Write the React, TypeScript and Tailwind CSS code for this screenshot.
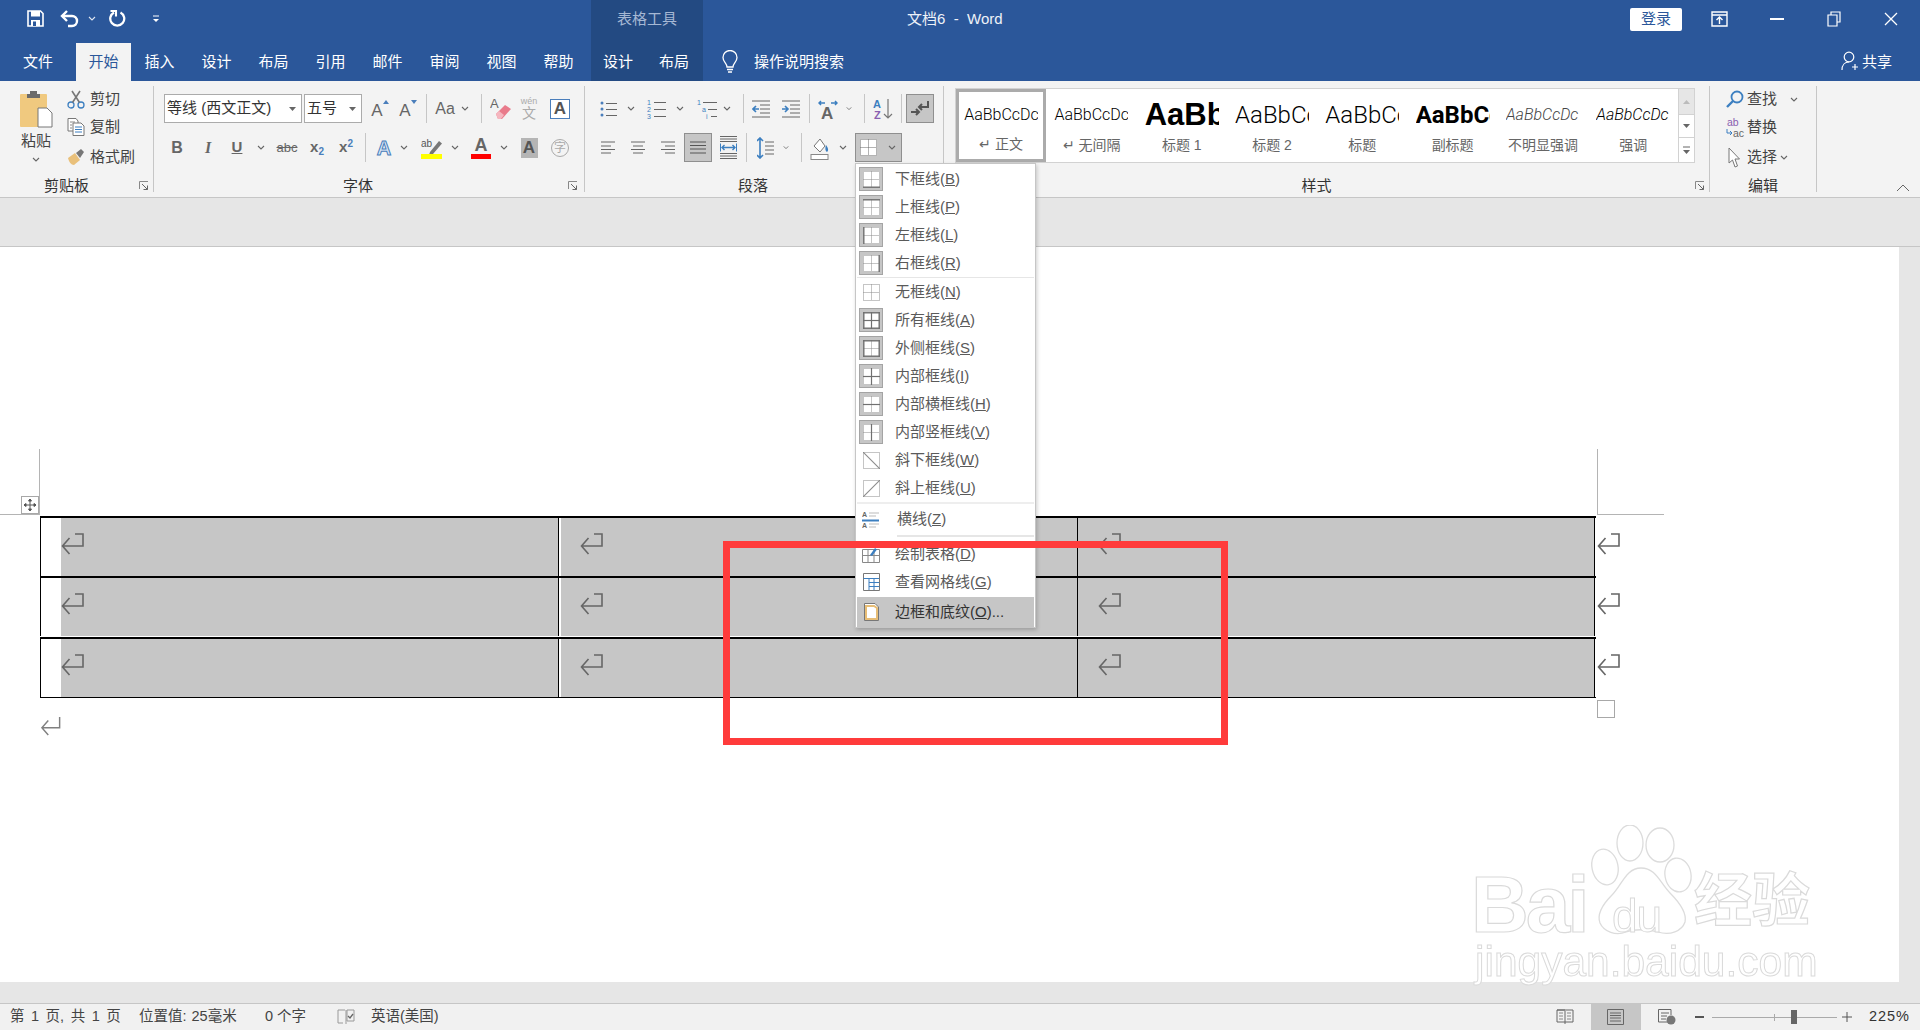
import React from "react";

const Chev = ({ c = "#666" }: { c?: string }) => (
  <svg width="8" height="5" viewBox="0 0 8 5" fill="none"><path d="M1 1L4 4L7 1" stroke={c} strokeWidth="1.1" /></svg>
);
const Launcher = () => (
  <svg width="10" height="10" viewBox="0 0 10 10" fill="none"><path d="M0.5 8V0.5H9" stroke="#888" /><path d="M3 3L8.5 8.5M8.5 4.5V8.5H4.5" stroke="#666" /></svg>
);
const Sep = () => <div className="w-px h-[29px] bg-[#c6c6c6] shrink-0" />;
const Ret = ({ c = "#666" }: { c?: string }) => (
  <svg width="23" height="22" viewBox="0 0 23 22" fill="none"><path d="M14 1H22V13H1.5M8.5 5L1.5 13L8.5 21" stroke={c} strokeWidth="1.6" /></svg>
);
const Lines = ({ w = 16, rows, x = 0 }: { w?: number; rows: number[]; x?: number }) => (
  <>{rows.map((y, i) => <path key={i} d={`M${x} ${y}H${x + w}`} stroke="#666" strokeWidth="1" />)}</>
);

const Bd = ({ s = "", boxed = true, d = "" }: { s?: string; boxed?: boolean; d?: string }) => (
  <span className={boxed ? "w-[24px] h-[24px] shrink-0 bg-[#c6c6c6] border border-[#a4a4a4] flex items-center justify-center" : "w-[24px] h-[24px] shrink-0 flex items-center justify-center"}>
    <svg width="17" height="17" viewBox="0 0 17 17" fill={boxed ? "#fff" : "none"}>
      {boxed && <rect width="17" height="17" />}
      <path d={d ? "M.5 .5H16.5V16.5H.5Z" : "M.5 .5H16.5V16.5H.5ZM8.5 .5V16.5M.5 8.5H16.5"} fill="none" stroke="#8a8a8a" strokeDasharray="1 1" />
      {s.includes("b") && <path d="M0 16.2H17" stroke="#707070" strokeWidth="1.4" />}
      {s.includes("t") && <path d="M0 .8H17" stroke="#707070" strokeWidth="1.4" />}
      {s.includes("l") && <path d="M.8 0V17" stroke="#707070" strokeWidth="1.4" />}
      {s.includes("r") && <path d="M16.2 0V17" stroke="#707070" strokeWidth="1.4" />}
      {s.includes("h") && <path d="M0 8.5H17" stroke="#707070" strokeWidth="1.2" />}
      {s.includes("v") && <path d="M8.5 0V17" stroke="#707070" strokeWidth="1.2" />}
      {d === "down" && <path d="M0 0L17 17" stroke="#8a8a8a" strokeWidth="1.1" />}
      {d === "up" && <path d="M0 17L17 0" stroke="#8a8a8a" strokeWidth="1.1" />}
    </svg>
  </span>
);

const MenuItem = ({ icon, label, k, end = "", tone = "text-[#5a5a5a]" }: { icon: React.ReactNode; label: string; k: string; end?: string; tone?: string }) => (
  <div className={`flex items-center h-[28px] pl-[3px] shrink-0 ${tone}`}>
    {icon}
    <span className="ml-[12px] text-[15px] whitespace-nowrap">{label}(<u>{k}</u>){end}</span>
  </div>
);

const Style = ({ sample, label, cls }: { sample: string; label: string; cls: string }) => (
  <div className="w-[90.3px] h-full flex flex-col items-center shrink-0">
    <div className="h-[48px] w-[74px] overflow-hidden flex items-center justify-start text-black whitespace-nowrap mt-[2px]"><span className={cls}>{sample}</span></div>
    <div className="text-[14px] text-[#666] leading-[20px] mt-[-4px] whitespace-nowrap">{label}</div>
  </div>
);

const TopTab = ({ t }: { t: string }) => <div className="w-[57px] text-center">{t}</div>;

const TableRow = () => (
  <div className="flex h-[58px] shrink-0">
    <div className="w-[1556px] flex border-x border-black">
      <div className="w-[20px] bg-white" />
      <div className="w-[497px] bg-[#c6c6c6] pt-[15px]"><Ret /></div>
      <div className="w-px bg-black" />
      <div className="w-[2px] bg-white" />
      <div className="w-[516px] bg-[#c6c6c6] pt-[15px] pl-[19px]"><Ret /></div>
      <div className="w-px bg-black" />
      <div className="flex-1 bg-[#c6c6c6] pt-[15px] pl-[20px]"><Ret /></div>
    </div>
    <div className="ml-[2px] pt-[15px]"><Ret /></div>
  </div>
);

const roboto = "font-['Roboto','Liberation_Sans',sans-serif] font-light";

export default function App() {
  return (
    <div className="relative w-[1920px] h-[1030px] overflow-hidden flex flex-col bg-white text-[#444] text-[15px] font-['Liberation_Sans','Noto_Sans_CJK_SC',sans-serif]">
      {/* Header */}
      <div className="flex h-[81px] bg-[#2b579a] text-white shrink-0">
        <div className="w-[591px] flex flex-col">
          <div className="h-[43px] flex items-center pb-[6px]">
            <div className="ml-[26px] w-[18px] flex justify-center">
              <svg width="17" height="17" viewBox="0 0 17 17" fill="none"><path d="M1 1H13.5L16 3.5V16H1Z" stroke="#fff" strokeWidth="1.6" /><rect x="4" y="1" width="9" height="5.5" fill="#fff" /><rect x="4" y="10" width="9" height="6" fill="#fff" /><rect x="6" y="11.5" width="3" height="4.5" fill="#2b579a" /></svg>
            </div>
            <div className="ml-[16px] w-[20px] flex justify-center">
              <svg width="20" height="18" viewBox="0 0 20 18" fill="none"><path d="M2 6H12A5 5 0 0 1 12 16H8" stroke="#fff" strokeWidth="2.4" /><path d="M7 1L2 6L7 11" stroke="#fff" strokeWidth="2.4" /></svg>
            </div>
            <div className="ml-[8px]"><Chev c="#dfe6f1" /></div>
            <div className="ml-[12px] w-[18px] flex justify-center">
              <svg width="18" height="19" viewBox="0 0 18 19" fill="none"><path d="M6 3.4A7 7 0 1 0 12.5 3.4" stroke="#fff" strokeWidth="2.3" /><path d="M2.5 2H8V7.5" stroke="#fff" strokeWidth="2.1" /></svg>
            </div>
            <div className="ml-[26px]">
              <svg width="8" height="8" viewBox="0 0 8 8"><path d="M1 1H7" stroke="#fff" /><path d="M1 4H7L4 7Z" fill="#fff" /></svg>
            </div>
          </div>
          <div className="h-[38px] flex items-center">
            <div className="w-[76px] text-center">文件</div>
            <div className="w-[55px] h-full bg-[#f3f3f3] text-[#2b579a] flex items-center justify-center">开始</div>
            <TopTab t="插入" /><TopTab t="设计" /><TopTab t="布局" /><TopTab t="引用" /><TopTab t="邮件" /><TopTab t="审阅" /><TopTab t="视图" /><TopTab t="帮助" />
          </div>
        </div>
        <div className="w-[112px] bg-[#234a82] flex flex-col">
          <div className="h-[43px] flex items-center justify-center pb-[5px] text-[#a6b8d4]">表格工具</div>
          <div className="h-[38px] flex items-center"><span className="w-[54px] text-center">设计</span><span className="w-[58px] text-center">布局</span></div>
        </div>
        <div className="flex-1 flex flex-col">
          <div className="h-[43px] flex items-center pb-[5px]">
            <div className="ml-[204px] text-[15px] text-[#eef2f8] whitespace-pre">文档6  -  Word</div>
            <div className="ml-auto w-[52px] h-[23px] bg-white rounded-[2px] text-[#2b579a] flex items-center justify-center">登录</div>
            <div className="ml-[28px] w-[18px] flex justify-center">
              <svg width="17" height="16" viewBox="0 0 17 16" fill="none"><path d="M1 1H16V15H1ZM1 4H16" stroke="#fff" strokeWidth="1.4" /><path d="M8.5 13V6.5M5.5 9L8.5 6L11.5 9" stroke="#fff" strokeWidth="1.4" /></svg>
            </div>
            <div className="ml-[42px] w-[14px] h-[2px] bg-white" />
            <div className="ml-[43px]">
              <svg width="14" height="16" viewBox="0 0 14 16" fill="none"><path d="M1 4H10V15H1ZM4 4V1H13V11H10" stroke="#fff" strokeWidth="1.2" /></svg>
            </div>
            <div className="ml-[43px] mr-[22px]">
              <svg width="14" height="14" viewBox="0 0 14 14" fill="none"><path d="M1 1L13 13M13 1L1 13" stroke="#fff" strokeWidth="1.3" /></svg>
            </div>
          </div>
          <div className="h-[38px] flex items-center">
            <div className="ml-[19px]">
              <svg width="16" height="24" viewBox="0 0 16 24" fill="none"><path d="M5 17C5 13 1 12 1 7.5A7 7 0 0 1 15 7.5C15 12 11 13 11 17Z" stroke="#fff" strokeWidth="1.3" /><path d="M5 19.5H11M6 22H10" stroke="#fff" strokeWidth="1.5" /></svg>
            </div>
            <div className="ml-[16px]">操作说明搜索</div>
            <div className="ml-auto">
              <svg width="17" height="22" viewBox="0 0 17 22" fill="none"><circle cx="8" cy="6" r="4.8" stroke="#fff" strokeWidth="1.2" /><path d="M1 19C1 14 4 11 8 11M11 16H17M14 13V19" stroke="#fff" strokeWidth="1.2" /></svg>
            </div>
            <div className="ml-[4px] mr-[28px]">共享</div>
          </div>
        </div>
      </div>

      {/* Ribbon */}
      <div className="h-[117px] shrink-0 bg-[#f3f3f3] border-b border-[#c6c6c6] flex items-start">
        {/* clipboard */}
        <div className="w-[154px] h-[106px] mt-[5px] border-r border-[#c6c6c6] flex flex-col shrink-0 *:shrink-0">
          <div className="flex h-[89px]">
            <div className="ml-[3px] w-[64px] flex flex-col items-center pl-[2px]">
              <svg className="mt-[4px] shrink-0" width="34" height="38" viewBox="0 0 34 38"><rect x="1" y="4" width="27" height="33" rx="1" fill="#f0c97f" /><path d="M8 4H11V1H18V4H21V8H8Z" fill="#6b6b6b" /><path d="M19 18H28L33 23V37H19Z" fill="#fff" stroke="#777" /></svg>
              <div className="mt-[2px] leading-[22px]">粘贴</div>
              <div className="mt-[5px]"><Chev /></div>
            </div>
            <div className="flex flex-col *:shrink-0">
              <div className="h-[26px] flex items-center">
                <div className="w-[18px]"><svg width="18" height="19" viewBox="0 0 18 19" fill="none"><circle cx="4" cy="15" r="3" stroke="#3c7fc0" strokeWidth="1.3" /><circle cx="14" cy="15" r="3" stroke="#3c7fc0" strokeWidth="1.3" /><path d="M5.5 12.5L13 1M12.5 12.5L5 1" stroke="#777" strokeWidth="1.6" /></svg></div>
                <div className="ml-[5px]">剪切</div>
              </div>
              <div className="h-[30px] flex items-center">
                <div className="w-[18px]"><svg width="18" height="18" viewBox="0 0 18 18" fill="none"><path d="M1 .5H9L11 3V13H1Z" fill="#fff" stroke="#777" /><path d="M6 5H14L17 8V17.5H6Z" fill="#fff" stroke="#777" /><path d="M8 9H15M8 11.5H15M8 14H15" stroke="#3c7fc0" /><path d="M3 4H8M3 7H5M3 10H5" stroke="#888" /></svg></div>
                <div className="ml-[5px]">复制</div>
              </div>
              <div className="h-[30px] flex items-center">
                <div className="w-[18px]"><svg width="18" height="18" viewBox="0 0 18 18"><path d="M1 10L8 5L13 12L7 17C4 17 2 14 1 10Z" fill="#e9c07a" /><path d="M9 5L14 1L17 4L13 10Z" fill="#777" /></svg></div>
                <div className="ml-[5px] whitespace-nowrap">格式刷</div>
              </div>
            </div>
          </div>
          <div className="h-[20px] flex items-center translate-y-px">
            <div className="flex-1 text-center text-[#333]">剪贴板</div>
            <div className="w-[20px] pl-[6px]"><Launcher /></div>
          </div>
        </div>

        {/* font */}
        <div className="w-[431px] h-[106px] mt-[5px] border-r border-[#c6c6c6] flex flex-col shrink-0 *:shrink-0">
          <div className="h-[29px] mt-[8px] flex items-center">
            <div className="ml-[10px] w-[138px] h-[29px] bg-white border border-[#ababab] flex items-center justify-between pl-[2px] pr-[5px] text-[#333] whitespace-nowrap">
              <span>等线 (西文正文)</span><svg width="7" height="4" viewBox="0 0 7 4"><path d="M0 0H7L3.5 4Z" fill="#666" /></svg>
            </div>
            <div className="ml-[2px] w-[58px] h-[29px] bg-white border border-[#ababab] flex items-center justify-between pl-[2px] pr-[5px] text-[#333]">
              <span>五号</span><svg width="7" height="4" viewBox="0 0 7 4"><path d="M0 0H7L3.5 4Z" fill="#666" /></svg>
            </div>
            <div className="ml-[4px] w-[28px] flex justify-center text-[17px] text-[#666] leading-none"><span className="pt-[3px]">A</span><svg className="mt-[1px]" width="6" height="4" viewBox="0 0 6 4"><path d="M0 4L3 0L6 4Z" fill="#4a7ebb" /></svg></div>
            <div className="w-[28px] flex justify-center text-[17px] text-[#666] leading-none"><span className="pt-[3px]">A</span><svg className="mt-[1px]" width="6" height="4" viewBox="0 0 6 4"><path d="M0 0L3 4L6 0Z" fill="#4a7ebb" /></svg></div>
            <div className="ml-[4px]"><Sep /></div>
            <div className="ml-[2px] w-[32px] text-center text-[16px] text-[#666]">Aa</div>
            <div className="w-[8px] flex justify-center"><Chev /></div>
            <div className="ml-[12px]"><Sep /></div>
            <div className="w-[38px] flex justify-center">
              <svg width="22" height="24" viewBox="0 0 22 24"><text x="0" y="11" fontSize="13" fill="#666" fontFamily="Liberation Sans">A</text><path d="M6 17L15 8L21 12L12 22H8Z" fill="#e97b8b" /><path d="M6 17L9 14L14 18L11 22H8Z" fill="#f5b6bf" /></svg>
            </div>
            <div className="w-[18px] flex flex-col items-center text-[#aaa] leading-none">
              <span className="text-[9px]">wén</span><span className="text-[14px]">文</span>
            </div>
            <div className="ml-[12px] w-[20px] h-[20px] border border-[#4a7ebb] bg-white text-[17px] text-[#555] flex items-center justify-center leading-none font-semibold">A</div>
          </div>
          <div className="h-[29px] mt-[10px] flex items-center text-[#666]">
            <div className="ml-[9px] w-[28px] text-center font-bold text-[16px]">B</div>
            <div className="ml-[3px] w-[28px] text-center italic font-bold text-[16px] font-['Liberation_Serif',serif]">I</div>
            <div className="w-[30px] text-center font-bold text-[15px] underline">U</div>
            <div className="w-[18px] flex justify-center"><Chev /></div>
            <div className="w-[34px] text-center text-[13px] line-through">abc</div>
            <div className="w-[26px] text-center font-bold text-[15px]">x<sub className="text-[10px] text-[#4a7ebb]">2</sub></div>
            <div className="w-[32px] text-center font-bold text-[15px]">x<sup className="text-[10px] text-[#4a7ebb]">2</sup></div>
            <div className="ml-[3px]"><Sep /></div>
            <div className="ml-[3px] w-[30px] text-center text-[20px] font-bold text-[#dbe8f6] [-webkit-text-stroke:1px_#4a7ebb]">A</div>
            <div className="w-[10px] flex justify-center"><Chev /></div>
            <div className="ml-[5px] w-[36px] flex justify-center">
              <svg width="22" height="22" viewBox="0 0 22 22"><text x="0" y="10" fontSize="10" fill="#555" fontFamily="Liberation Sans">ab</text><path d="M9 15L18 4L21 6.5L12 17L8 18Z" fill="#777" /><rect x="0" y="17" width="21" height="5" fill="#ffff00" /></svg>
            </div>
            <div className="w-[10px] flex justify-center"><Chev /></div>
            <div className="ml-[3px] w-[36px] flex flex-col items-center leading-none">
              <span className="text-[18px] font-semibold">A</span><span className="w-[20px] h-[5px] bg-[#ff0000]" />
            </div>
            <div className="w-[10px] flex justify-center"><Chev /></div>
            <div className="w-[40px] flex justify-center"><span className="w-[17px] h-[20px] bg-[#b5b5b5] text-[17px] leading-[20px] text-center font-semibold text-[#555]">A</span></div>
            <div className="w-[22px] flex justify-center"><span className="w-[18px] h-[18px] rounded-full border border-[#aaa] text-[12px] leading-[16px] text-center text-[#aaa]">字</span></div>
          </div>
          <div className="mt-[14px] h-[20px] flex items-center">
            <div className="flex-1 text-center text-[#333]">字体</div>
            <div className="w-[22px] pl-[6px]"><Launcher /></div>
          </div>
        </div>

        {/* paragraph */}
        <div className="w-[359px] h-[106px] mt-[5px] border-r border-[#c6c6c6] flex flex-col shrink-0 *:shrink-0">
          <div className="h-[29px] mt-[8px] flex items-center">
            <div className="ml-[10px] w-[26px] flex justify-center"><svg width="17" height="18" viewBox="0 0 17 18" fill="none"><circle cx="2" cy="3" r="1.5" fill="#4a7ebb" /><circle cx="2" cy="9" r="1.5" fill="#4a7ebb" /><circle cx="2" cy="15" r="1.5" fill="#4a7ebb" /><Lines x={6} w={11} rows={[3.5, 9.5, 15.5]} /></svg></div>
            <div className="w-[20px] flex justify-center"><Chev /></div>
            <div className="w-[30px] flex justify-center"><svg width="19" height="20" viewBox="0 0 19 20" fill="none"><g fontSize="7" fill="#3c7fc0" fontFamily="Liberation Sans"><text x="0" y="6">1</text><text x="0" y="13">2</text><text x="0" y="20">3</text></g><Lines x={7} w={12} rows={[3.5, 10.5, 17.5]} /></svg></div>
            <div className="w-[18px] flex justify-center"><Chev /></div>
            <div className="ml-[2px] w-[32px] flex justify-center"><svg width="20" height="20" viewBox="0 0 20 20" fill="none"><g fontSize="7" fill="#3c7fc0" fontFamily="Liberation Sans"><text x="0" y="6">1</text><text x="5" y="13">a</text><text x="9" y="20">i</text></g><Lines x={6} w={14} rows={[3.5]} /><Lines x={11} w={9} rows={[10.5]} /><Lines x={14} w={6} rows={[17.5]} /></svg></div>
            <div className="w-[8px] flex justify-center"><Chev /></div>
            <div className="ml-[12px]"><Sep /></div>
            <div className="w-[34px] flex justify-center"><svg width="18" height="18" viewBox="0 0 18 18" fill="none"><Lines w={18} rows={[1, 17]} /><Lines x={8} w={10} rows={[5, 9, 13]} /><path d="M7 9H1M4 6L1 9L4 12" stroke="#3c7fc0" strokeWidth="1.6" /></svg></div>
            <div className="w-[26px] flex justify-center"><svg width="18" height="18" viewBox="0 0 18 18" fill="none"><Lines w={18} rows={[1, 17]} /><Lines x={8} w={10} rows={[5, 9, 13]} /><path d="M0 9H6M3 6L6 9L3 12" stroke="#3c7fc0" strokeWidth="1.6" /></svg></div>
            <div className="ml-[5px]"><Sep /></div>
            <div className="w-[36px] flex justify-center"><svg width="20" height="20" viewBox="0 0 20 20" fill="none"><text x="3" y="20" fontSize="17" fontWeight="bold" fill="#666" fontFamily="Liberation Sans">A</text><path d="M1 4H7M3 2L1 4L3 6M13 4H19M17 2L19 4L17 6" stroke="#3c7fc0" strokeWidth="1.5" /></svg></div>
            <div className="w-[6px] flex justify-center"><Chev /></div>
            <div className="ml-[12px]"><Sep /></div>
            <div className="w-[36px] flex justify-center"><svg width="20" height="22" viewBox="0 0 20 22" fill="none"><text x="0" y="10" fontSize="11" fontWeight="bold" fill="#3c7fc0" fontFamily="Liberation Sans">A</text><text x="1" y="21" fontSize="11" fontWeight="bold" fill="#8a5fb0" fontFamily="Liberation Sans">Z</text><path d="M15 1V20M11 16L15 20L19 16" stroke="#777" strokeWidth="1.2" /></svg></div>
            <Sep />
            <div className="ml-[4px] w-[28px] h-[29px] bg-[#c6c6c6] border border-[#8f8f8f] flex items-center justify-center"><svg width="18" height="16" viewBox="0 0 18 16" fill="none"><path d="M17 0V6H8M11 3L8 6L11 9" stroke="#555" strokeWidth="2" /><path d="M0 11H8M5 8L8 11L5 14" stroke="#555" strokeWidth="2" /></svg></div>
          </div>
          <div className="h-[29px] mt-[10px] flex items-center">
            <div className="ml-[8px] w-[30px] flex justify-center"><svg width="14" height="13" viewBox="0 0 14 13" fill="none"><path d="M0 1H14M0 5H10M0 8.5H14M0 12H10" stroke="#666" /></svg></div>
            <div className="w-[30px] flex justify-center"><svg width="14" height="13" viewBox="0 0 14 13" fill="none"><path d="M0 1H14M2 5H12M0 8.5H14M2 12H12" stroke="#666" /></svg></div>
            <div className="w-[30px] flex justify-center"><svg width="14" height="13" viewBox="0 0 14 13" fill="none"><path d="M0 1H14M4 5H14M0 8.5H14M4 12H14" stroke="#666" /></svg></div>
            <div className="ml-px w-[28px] h-[29px] bg-[#c6c6c6] border border-[#8f8f8f] flex items-center justify-center"><svg width="16" height="13" viewBox="0 0 16 13" fill="none"><path d="M0 1H16M0 4.5H16M0 8H16M0 12H16" stroke="#555" /></svg></div>
            <div className="w-[32px] flex justify-center"><svg width="17" height="23" viewBox="0 0 17 23" fill="none"><path d="M0 .5H17M0 3H17M0 5.5H17M0 17.5H17M0 20H17M0 22.5H17" stroke="#666" /><path d="M.5 7.5V15.5M16.5 7.5V15.5" stroke="#3c7fc0" /><path d="M2 11.5H15M4.5 9L2 11.5L4.5 14M12.5 9L15 11.5L12.5 14" stroke="#3c7fc0" strokeWidth="1.4" /></svg></div>
            <div className="ml-[2px]"><Sep /></div>
            <div className="w-[36px] flex justify-center"><svg width="17" height="22" viewBox="0 0 17 22" fill="none"><path d="M3 1V21M0 4L3 1L6 4M0 18L3 21L6 18" stroke="#3c7fc0" strokeWidth="1.6" /><Lines x={8} w={9} rows={[5, 9, 13, 17]} /></svg></div>
            <div className="w-[6px] flex justify-center"><Chev /></div>
            <div className="ml-[12px]"><Sep /></div>
            <div className="w-[36px] flex justify-center"><svg width="20" height="24" viewBox="0 0 20 24" fill="none"><path d="M4 10L10 3L15 10L10 16Z" fill="#fff" stroke="#777" /><path d="M16 9C18 12 19 14 17 16C15 15 15 12 16 9Z" fill="#3c7fc0" /><rect x="1" y="18.5" width="17" height="5" fill="#fff" stroke="#888" /></svg></div>
            <div className="w-[10px] flex justify-center"><Chev /></div>
            <div className="ml-[7px] w-[47px] h-[29px] bg-[#c6c6c6] border border-[#8f8f8f] flex items-center pl-[4px] shrink-0">
              <svg width="17" height="17" viewBox="0 0 17 17" fill="#fff"><rect width="17" height="17" /><path d="M.5 .5H16.5V16.5H.5ZM8.5 .5V16.5M.5 8.5H16.5" fill="none" stroke="#666" strokeDasharray="1 1" /></svg>
              <div className="ml-[11px]"><Chev /></div>
            </div>
          </div>
          <div className="mt-[14px] h-[20px] flex items-center">
            <div className="flex-1 text-center text-[#333]">段落</div>
            <div className="w-[22px] pl-[6px]"><Launcher /></div>
          </div>
        </div>

        {/* styles */}
        <div className="w-[766px] h-[106px] mt-[5px] border-r border-[#c6c6c6] flex flex-col shrink-0 *:shrink-0">
          <div className="ml-[11px] mt-[2px] w-[740px] h-[75px] bg-white border border-[#d2d2d2] flex">
            <div className="w-[90.3px] h-full border-[3px] border-[#ababab] shrink-0 flex flex-col items-center">
              <div className="h-[45px] w-[74px] overflow-hidden flex items-center text-black whitespace-nowrap"><span className={`text-[16px] ${roboto}`}>AaBbCcDc</span></div>
              <div className="text-[14px] text-[#666] leading-[20px] mt-[-3px] whitespace-nowrap">↵ 正文</div>
            </div>
            <Style sample="AaBbCcDc" label="↵ 无间隔" cls={`text-[16px] ${roboto}`} />
            <Style sample="AaBbC" label="标题 1" cls="text-[31px] font-bold" />
            <Style sample="AaBbCc" label="标题 2" cls={`text-[24px] ${roboto}`} />
            <Style sample="AaBbCc" label="标题" cls={`text-[24px] ${roboto}`} />
            <Style sample="AaBbCc" label="副标题" cls="text-[24px] font-bold font-['Roboto',sans-serif]" />
            <Style sample="AaBbCcDc" label="不明显强调" cls={`text-[16px] italic text-[#444] ${roboto}`} />
            <Style sample="AaBbCcDc" label="强调" cls={`text-[16px] italic ${roboto}`} />
            <div className="w-[16px] ml-auto flex flex-col border-l border-[#d2d2d2] shrink-0">
              <div className="h-[25px] bg-[#e6e6e6] flex items-center justify-center"><svg width="7" height="4" viewBox="0 0 7 4"><path d="M0 4H7L3.5 0Z" fill="#bbb" /></svg></div>
              <div className="h-[24px] border-y border-[#d2d2d2] flex items-center justify-center"><svg width="7" height="4" viewBox="0 0 7 4"><path d="M0 0H7L3.5 4Z" fill="#666" /></svg></div>
              <div className="flex-1 flex items-center justify-center"><svg width="7" height="9" viewBox="0 0 7 9"><path d="M0 1H7" stroke="#666" /><path d="M0 4H7L3.5 8Z" fill="#666" /></svg></div>
            </div>
          </div>
          <div className="mt-[13px] h-[20px] flex items-center">
            <div className="flex-1 text-center text-[#333]">样式</div>
            <div className="w-[20px] pl-[6px]"><Launcher /></div>
          </div>
        </div>

        {/* editing */}
        <div className="w-[107px] h-[106px] mt-[5px] border-r border-[#c6c6c6] flex flex-col shrink-0 *:shrink-0">
          <div className="h-[26px] flex items-center">
            <div className="ml-[16px] w-[18px]"><svg width="18" height="18" viewBox="0 0 18 18" fill="none"><circle cx="11" cy="7" r="5.5" stroke="#3c7fc0" strokeWidth="1.8" /><path d="M7 11L1 17" stroke="#3c7fc0" strokeWidth="2.4" /></svg></div>
            <div className="ml-[3px]">查找</div>
            <div className="ml-[13px]"><Chev /></div>
          </div>
          <div className="h-[30px] flex items-center">
            <div className="ml-[16px] w-[19px] h-[21px]"><svg width="20" height="22" viewBox="0 0 20 22"><text x="1" y="9" fontSize="10.5" fill="#8a5fb0" fontFamily="Liberation Sans">ab</text><text x="7" y="20" fontSize="10.5" fill="#666" fontFamily="Liberation Sans">ac</text><path d="M1 12V16H6M4 14L6 16L4 18" stroke="#3c7fc0" fill="none" /></svg></div>
            <div className="ml-[2px]">替换</div>
          </div>
          <div className="h-[30px] flex items-center">
            <div className="ml-[18px] w-[16px]"><svg width="12" height="21" viewBox="0 0 12 21" fill="none"><path d="M1 1V16L4.5 13L7 20L9.5 19L7 12H11.5Z" fill="#fff" stroke="#777" /></svg></div>
            <div className="ml-[3px]">选择</div>
            <div className="ml-[3px]"><Chev /></div>
          </div>
          <div className="mt-[4px] h-[20px] flex items-center justify-center text-[#333]">编辑</div>
        </div>
        <div className="flex-1 h-[106px] mt-[5px] flex items-end justify-end pr-[10px]">
          <svg width="14" height="8" viewBox="0 0 14 8" fill="none"><path d="M1 7L7 1L13 7" stroke="#666" /></svg>
        </div>
      </div>

      {/* Document area */}
      <div className="h-[49px] shrink-0 bg-[#e6e6e6] border-b border-[#c6c6c6]" />
      <div className="h-[735px] shrink-0 flex">
        <div className="flex-1 bg-white flex flex-col">
          <div className="h-[202px] shrink-0" />
          <div className="h-[66px] flex shrink-0">
            <div className="w-[40px] h-full border-r border-b border-[#b4b4b4] relative">
              <div className="absolute right-0 bottom-0 w-[18px] h-[18px] border border-[#a8a8a8] bg-white flex items-center justify-center">
                <svg width="14" height="14" viewBox="0 0 14 14" fill="none"><path d="M7 1V13M1 7H13" stroke="#555" /><path d="M5.5 3L7 1L8.5 3ZM5.5 11L7 13L8.5 11ZM3 5.5L1 7L3 8.5ZM11 5.5L13 7L11 8.5Z" fill="#555" stroke="#555" /></svg>
              </div>
            </div>
            <div className="ml-[1557px] w-[67px] h-full border-l border-b border-[#b4b4b4]" />
          </div>
          <div className="h-px shrink-0" />
          <div className="relative ml-[40px] w-[1580px] flex flex-col shrink-0">
            <div className="w-[1556px] h-[2px] bg-black" />
            <TableRow />
            <div className="w-[1556px] h-[2px] bg-black" />
            <TableRow />
            <div className="w-[1556px] h-px bg-white" />
            <div className="w-[1556px] h-[2px] bg-black" />
            <TableRow />
            <div className="w-[1556px] h-px bg-black" />
            <div className="absolute left-[1557px] top-[184px] w-[18px] h-[18px] border border-[#a8a8a8] bg-white" />
          </div>
          <div className="ml-[40px] mt-[18px]"><svg width="22" height="20" viewBox="0 0 23 22" fill="none"><path d="M21 1V13H1.5M8.5 5L1.5 13L8.5 21" stroke="#808080" strokeWidth="1.6" /></svg></div>
        </div>
        <div className="w-[21px] bg-[#e6e6e6] shrink-0" />
      </div>
      <div className="h-[21px] shrink-0 bg-[#e6e6e6]" />

      {/* Status bar */}
      <div className="h-[27px] shrink-0 bg-[#f1f1f1] border-t border-[#c6c6c6] flex items-center text-[#444] text-[14.5px] whitespace-nowrap">
        <div className="ml-[10px] w-[129px] [word-spacing:2.5px]">第 1 页,  共 1 页</div>
        <div className="w-[126px] [word-spacing:1px]">位置值: 25毫米</div>
        <div className="w-[72px]">0 个字</div>
        <div className="w-[34px]"><svg width="18" height="16" viewBox="0 0 18 16" fill="none"><path d="M8 1H1V14H6M10 1H17V12H10Z" stroke="#999" /><path d="M9 1V15" stroke="#999" /><path d="M11 7L13 9L16 5" stroke="#666" strokeWidth="1.3" /></svg></div>
        <div>英语(美国)</div>
        <div className="ml-auto flex items-center h-full">
          <svg width="18" height="16" viewBox="0 0 18 16" fill="none"><path d="M9 2V15M1 1H9M9 1H17V13H1V1Z" stroke="#666" /><path d="M3 4H7M3 7H7M3 10H7M11 4H15M11 7H15M11 10H15" stroke="#888" /></svg>
          <div className="ml-[17px] w-[50px] h-full bg-[#c6c6c6] flex items-center justify-center"><svg width="17" height="16" viewBox="0 0 17 16" fill="none"><path d="M.5 .5H16.5V15.5H.5Z" stroke="#666" /><path d="M3 4H14M3 6.5H14M3 9H14M3 12H14" stroke="#666" /></svg></div>
          <div className="ml-[17px] w-[18px]"><svg width="18" height="16" viewBox="0 0 18 16" fill="none"><path d="M11 13H.5V.5H13V6" stroke="#666" /><path d="M3 4H11M3 7H9M3 10H8" stroke="#666" /><circle cx="13" cy="11" r="4.5" fill="#777" /></svg></div>
          <div className="ml-[19px] w-[9px] h-[1.5px] bg-[#555]" />
          <div className="ml-[8px] w-[125px] h-[14px] flex items-center">
            <div className="w-[62px] h-px bg-[#aaa]" />
            <div className="w-px h-[7px] bg-[#aaa]" />
            <div className="w-[16px] h-px bg-[#aaa]" />
            <div className="w-[6px] h-[14px] bg-[#666] shrink-0" />
            <div className="flex-1 h-px bg-[#aaa]" />
          </div>
          <div className="ml-[5px]"><svg width="10" height="10" viewBox="0 0 10 10" fill="none"><path d="M0 5H10M5 0V10" stroke="#555" /></svg></div>
          <div className="ml-[17px] mr-[10px] tracking-[1px] text-[#333]">225%</div>
        </div>
      </div>

      {/* Baidu watermark (over the page) */}
      <div className="absolute left-[1475px] top-[825px] w-[345px] h-[165px] blur-[0.4px] text-white pointer-events-none">
        <svg className="absolute left-[81px] top-0" width="150" height="112" viewBox="0 0 150 112" fill="none" stroke="#dcdcdc" strokeWidth="1.3">
          <ellipse cx="74" cy="18" rx="13" ry="18" />
          <ellipse cx="104" cy="20" rx="14" ry="17" />
          <ellipse cx="49" cy="42" rx="13" ry="18" transform="rotate(-12 49 42)" />
          <ellipse cx="122" cy="50" rx="13" ry="17" transform="rotate(-10 122 50)" />
          <path d="M85 43C70 43 66 60 56 70C46 80 41 90 44 98C48 107 60 111 70 107C78 104 92 104 102 107C114 111 126 106 129 97C131 88 124 78 114 68C104 58 100 43 85 43Z" fill="#fff" />
        </svg>
        <div className="absolute left-[-4px] top-[40px] text-[80px] font-bold leading-none tracking-[-3px] [-webkit-text-stroke:1.2px_#dadada]">Bai</div>
        <div className="absolute left-[137px] top-[68px] text-[46px] leading-none tracking-[-1px] [-webkit-text-stroke:1px_#dadada]">du</div>
        <div className="absolute left-[219px] top-[47px] text-[58px] font-bold leading-none whitespace-nowrap [-webkit-text-stroke:1.2px_#dadada]">经验</div>
        <div className="absolute left-0 top-[116px] text-[42.5px] leading-none whitespace-nowrap [-webkit-text-stroke:1px_#dadada]">jingyan.baidu.com</div>
      </div>

      {/* Dropdown menu */}
      <div className="absolute left-[855px] top-[163px] w-[181px] h-[465px] bg-white border border-[#c6c6c6] shadow-[1px_2px_4px_rgba(0,0,0,0.2)] flex flex-col pt-px">
        <MenuItem icon={<Bd s="b" />} label="下框线" k="B" />
        <MenuItem icon={<Bd s="t" />} label="上框线" k="P" />
        <MenuItem icon={<Bd s="l" />} label="左框线" k="L" />
        <MenuItem icon={<Bd s="r" />} label="右框线" k="R" />
        <div className="mx-px h-px bg-[#e6e6e6] shrink-0" />
        <MenuItem icon={<Bd boxed={false} />} label="无框线" k="N" />
        <MenuItem icon={<Bd s="tblrhv" />} label="所有框线" k="A" />
        <MenuItem icon={<Bd s="tblr" />} label="外侧框线" k="S" />
        <MenuItem icon={<Bd s="hv" />} label="内部框线" k="I" />
        <MenuItem icon={<Bd s="h" />} label="内部横框线" k="H" />
        <MenuItem icon={<Bd s="v" />} label="内部竖框线" k="V" />
        <MenuItem icon={<Bd boxed={false} d="down" />} label="斜下框线" k="W" />
        <MenuItem icon={<Bd boxed={false} d="up" />} label="斜上框线" k="U" />
        <div className="mx-px h-[2px] bg-[#eeeeee] shrink-0" />
        <div className="flex items-center h-[31px] pl-[3px] text-[#5a5a5a] shrink-0">
          <span className="w-[24px] h-[24px] flex items-center justify-center">
            <svg width="18" height="18" viewBox="0 0 18 18" fill="none"><g fontSize="7" fill="#666" fontWeight="bold" fontFamily="Liberation Sans"><text x="0" y="6">A</text><text x="0" y="17">A</text></g><path d="M7 2H17M7 5H14M7 13H17M7 16H14" stroke="#bbb" /><path d="M0 9.5H17" stroke="#3c7fc0" strokeWidth="2" /></svg>
          </span>
          <span className="ml-[14px] whitespace-nowrap">横线(<u>Z</u>)</span>
        </div>
        <div className="ml-[41px] mr-px h-[2px] bg-[#e6e6e6] shrink-0" />
        <div className="h-[3px] shrink-0" />
        <MenuItem icon={<span className="w-[24px] h-[24px] flex items-center justify-center"><svg width="18" height="18" viewBox="0 0 18 18" fill="none"><path d="M.5 4.5H17.5V17.5H.5ZM.5 10.5H17.5M6 4.5V17.5M12 4.5V17.5" stroke="#888" /><path d="M8 10L13 3L15 4.5L10 11Z" fill="#3c7fc0" /></svg></span>} label="绘制表格" k="D" />
        <MenuItem icon={<span className="w-[24px] h-[24px] flex items-center justify-center"><svg width="17" height="18" viewBox="0 0 17 18" fill="none"><path d="M.5 .5H16.5V17.5H.5Z" stroke="#777" /><path d="M6 5.5H16M6 9.5H16M6 13.5H16M6 5.5V17M11 5.5V17M.5 5.5H6" stroke="#3c7fc0" /></svg></span>} label="查看网格线" k="G" />
        <div className="mx-px mt-[1px] h-[30px] bg-[#c6c6c6] flex items-center pl-[2px] text-[#333] shrink-0">
          <span className="w-[24px] h-[24px] flex items-center justify-center"><svg width="15" height="18" viewBox="0 0 15 18" fill="none"><path d="M.5 .5H11L14.5 4V17.5H.5Z" fill="#fff" stroke="#777" /><path d="M2 3H10L13 5V16H2Z" fill="none" stroke="#e7bd75" strokeWidth="2" /></svg></span>
          <span className="ml-[12px] whitespace-nowrap">边框和底纹(<u>O</u>)...</span>
        </div>
      </div>

      {/* Red annotation rectangle */}
      <div className="absolute left-[723px] top-[541px] w-[505px] h-[204px] border-[7px] border-[#ff3b3b]" />
    </div>
  );
}
